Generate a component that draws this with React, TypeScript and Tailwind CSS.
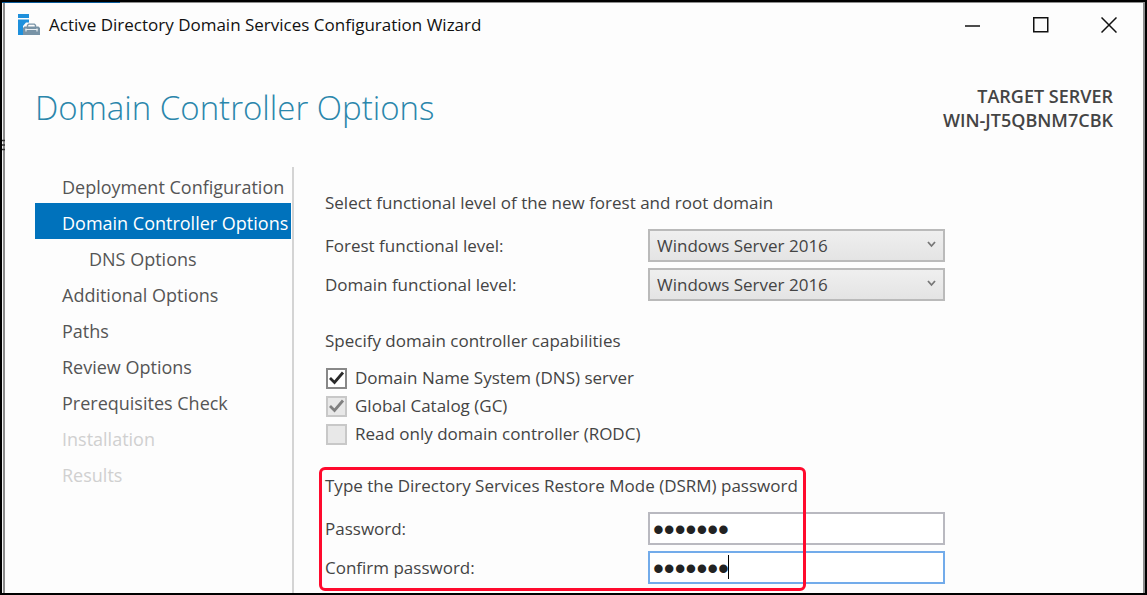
import { useState } from "react";

const steps = [
  { label: "Deployment Configuration", state: "open" },
  { label: "Domain Controller Options", state: "current" },
  { label: "DNS Options", state: "child" },
  { label: "Additional Options", state: "open" },
  { label: "Paths", state: "open" },
  { label: "Review Options", state: "open" },
  { label: "Prerequisites Check", state: "open" },
  { label: "Installation", state: "disabled" },
  { label: "Results", state: "disabled" },
];

const stepStyles: Record<string, string> = {
  open: "pl-[27px] text-[#555]",
  current: "bg-[#0072bc] pl-[27px] text-white",
  child: "pl-[54px] text-[#555]",
  disabled: "pl-[27px] text-[#d0d0d0]",
};

function ServerIcon() {
  return (
    <svg width="22" height="22" viewBox="0 0 22 22" aria-hidden="true">
      <path d="M0 0h11v4H0z" fill="#1e90dc" />
      <path d="M0 5.500h11v3H8L5 12v9H0z" fill="#1e90dc" />
      <path d="M9.500 13v-1.700l1.200-1.200h5.600l1.200 1.200V13" fill="none" stroke="#7893a6" strokeWidth="1.400" />
      <path d="M6.500 12.500h14l1.500 1.500v7H5v-7z" fill="#7893a6" />
      <path d="M7.500 15.500h12" stroke="#e8eef2" strokeWidth="1" />
      <path d="M8 14.500v3M19 14.500v3" stroke="#e8eef2" strokeWidth="1.200" />
    </svg>
  );
}

function TitleBar() {
  const button = "flex w-[68px] items-center justify-center text-[#111]";
  return (
    <header className="flex h-11 items-stretch pl-[13px]">
      <div className="flex flex-1 items-center gap-[9px]">
        <ServerIcon />
        <span className="text-[17px] text-[#111]">Active Directory Domain Services Configuration Wizard</span>
      </div>
      <button type="button" aria-label="Minimize" className={button}>
        <svg width="16" height="16" viewBox="0 0 16 16" stroke="currentColor" strokeWidth="1.500"><path d="M0 9h15" /></svg>
      </button>
      <button type="button" aria-label="Maximize" className={button}>
        <svg width="16" height="16" viewBox="0 0 16 16" fill="none" stroke="currentColor" strokeWidth="1.500"><path d="M.75.75h14v14h-14z" /></svg>
      </button>
      <button type="button" aria-label="Close" className={button}>
        <svg width="16" height="16" viewBox="0 0 16 16" stroke="currentColor" strokeWidth="1.500"><path d="M.5.5l15 15M15.500.5l-15 15" /></svg>
      </button>
    </header>
  );
}

function LevelSelect({ id, label }: { id: string; label: string }) {
  return (
    <>
      <label htmlFor={id}>{label}</label>
      <div className="relative">
        <select
          id={id}
          className="block h-[33px] w-full appearance-none border-2 border-[#bababa] bg-linear-to-b from-[#efefef] to-[#e4e4e4] px-[7px] text-[17px]"
        >
          <option>Windows Server 2016</option>
        </select>
        <svg className="pointer-events-none absolute top-3 right-[9px]" width="9" height="7" viewBox="0 0 9 7" fill="none" stroke="#777" strokeWidth="1.800" aria-hidden="true">
          <path d="M1 1l3.500 4L8 1" />
        </svg>
      </div>
    </>
  );
}

function Capability({ label, checked = false, disabled = false }: { label: string; checked?: boolean; disabled?: boolean }) {
  const [on, setOn] = useState(checked);
  return (
    <label className="flex h-7 items-center gap-2">
      <span className="relative ml-px size-[21px]">
        <input
          type="checkbox"
          checked={on}
          disabled={disabled}
          onChange={() => setOn(!on)}
          className="block size-full appearance-none border-2 border-[#888] bg-white disabled:border-[#c8c8c8] disabled:bg-[#e8e8e8]"
        />
        {on && (
          <svg
            className={disabled ? "pointer-events-none absolute inset-0 text-[#808080]" : "pointer-events-none absolute inset-0 text-[#2a2a2a]"}
            width="21"
            height="21"
            viewBox="0 0 21 21"
            fill="none"
            stroke="currentColor"
            strokeWidth="2.800"
            aria-hidden="true"
          >
            <path d="M4 10l4.500 4.500L17 4.500" />
          </svg>
        )}
      </span>
      {label}
    </label>
  );
}

export default function App() {
  const grid = "mt-3.5 grid grid-cols-[323px_297px] items-center gap-y-1.5";
  const field = "block h-[33px] w-full border-2 bg-white px-[3px] pt-[3px] font-['Liberation_Sans'] text-[31px] text-[#222] outline-none";
  return (
    <div className="relative flex min-h-screen bg-black p-0.5 font-['Open_Sans',sans-serif] text-[17px] leading-6 text-[#444]">
      <div className="absolute top-0.5 left-0.5 z-10 h-px w-[118px] bg-[#0a5c9c]" />
      <svg className="absolute top-[139px] left-0.5" width="3" height="12" viewBox="0 0 3 12" stroke="#333" strokeWidth="1.500" aria-hidden="true">
        <path d="M0 1.500h3M0 6h3M0 10.500h3" />
      </svg>
      <div className="flex w-full bg-[#f4f4f4] pl-px">
        <div className="flex w-full flex-col border-t border-r-2 border-l-2 border-[#8c8c8c] bg-[#fdfdfd]">
          <TitleBar />
          <div className="flex items-center justify-between pt-9 pr-[30px] pl-[30px]">
            <h1 className="text-[33px] leading-[50px] font-light text-[#2a86ab]">Domain Controller Options</h1>
            <div className="text-right text-[18px] leading-6 font-semibold">
              <p>TARGET SERVER</p>
              <p>WIN-JT5QBNM7CBK</p>
            </div>
          </div>
          <div className="mt-[34px] flex flex-1 pl-[30px]">
            <nav className="w-[259px] shrink-0 border-r-2 border-[#d4d4d4] pr-px">
              <ul className="text-[18px]">
                {steps.map((s) => (
                  <li key={s.label}>
                    <a href="#" aria-disabled={s.state === "disabled"} className={`flex h-9 items-center pt-1 whitespace-nowrap ${stepStyles[s.state]}`}>
                      {s.label}
                    </a>
                  </li>
                ))}
              </ul>
            </nav>
            <main className="pt-6 pb-2 pl-[31px]">
              <h2>Select functional level of the new forest and root domain</h2>
              <div className={grid}>
                <LevelSelect id="forest" label="Forest functional level:" />
                <LevelSelect id="domain" label="Domain functional level:" />
              </div>
              <h2 className="mt-7 mb-[11px]">Specify domain controller capabilities</h2>
              <Capability label="Domain Name System (DNS) server" checked />
              <Capability label="Global Catalog (GC)" checked disabled />
              <Capability label="Read only domain controller (RODC)" disabled />
              <section className="relative mt-[26px]">
                <h2>Type the Directory Services Restore Mode (DSRM) password</h2>
                <div className={grid}>
                  <label htmlFor="password">Password:</label>
                  <input id="password" type="password" defaultValue="1234567" className={`${field} border-[#b9b9c0]`} />
                  <label htmlFor="confirm">Confirm password:</label>
                  <div className="relative">
                    <input id="confirm" type="password" defaultValue="1234567" className={`${field} border-[#72abea]`} />
                    <span className="pointer-events-none absolute top-1 left-20 h-6 w-px bg-black" />
                  </div>
                </div>
                <div className="pointer-events-none absolute -top-[7px] -bottom-[7px] -left-1.5 w-[487px] rounded-md border-3 border-[#ff0a2d]" />
              </section>
            </main>
          </div>
        </div>
      </div>
    </div>
  );
}
